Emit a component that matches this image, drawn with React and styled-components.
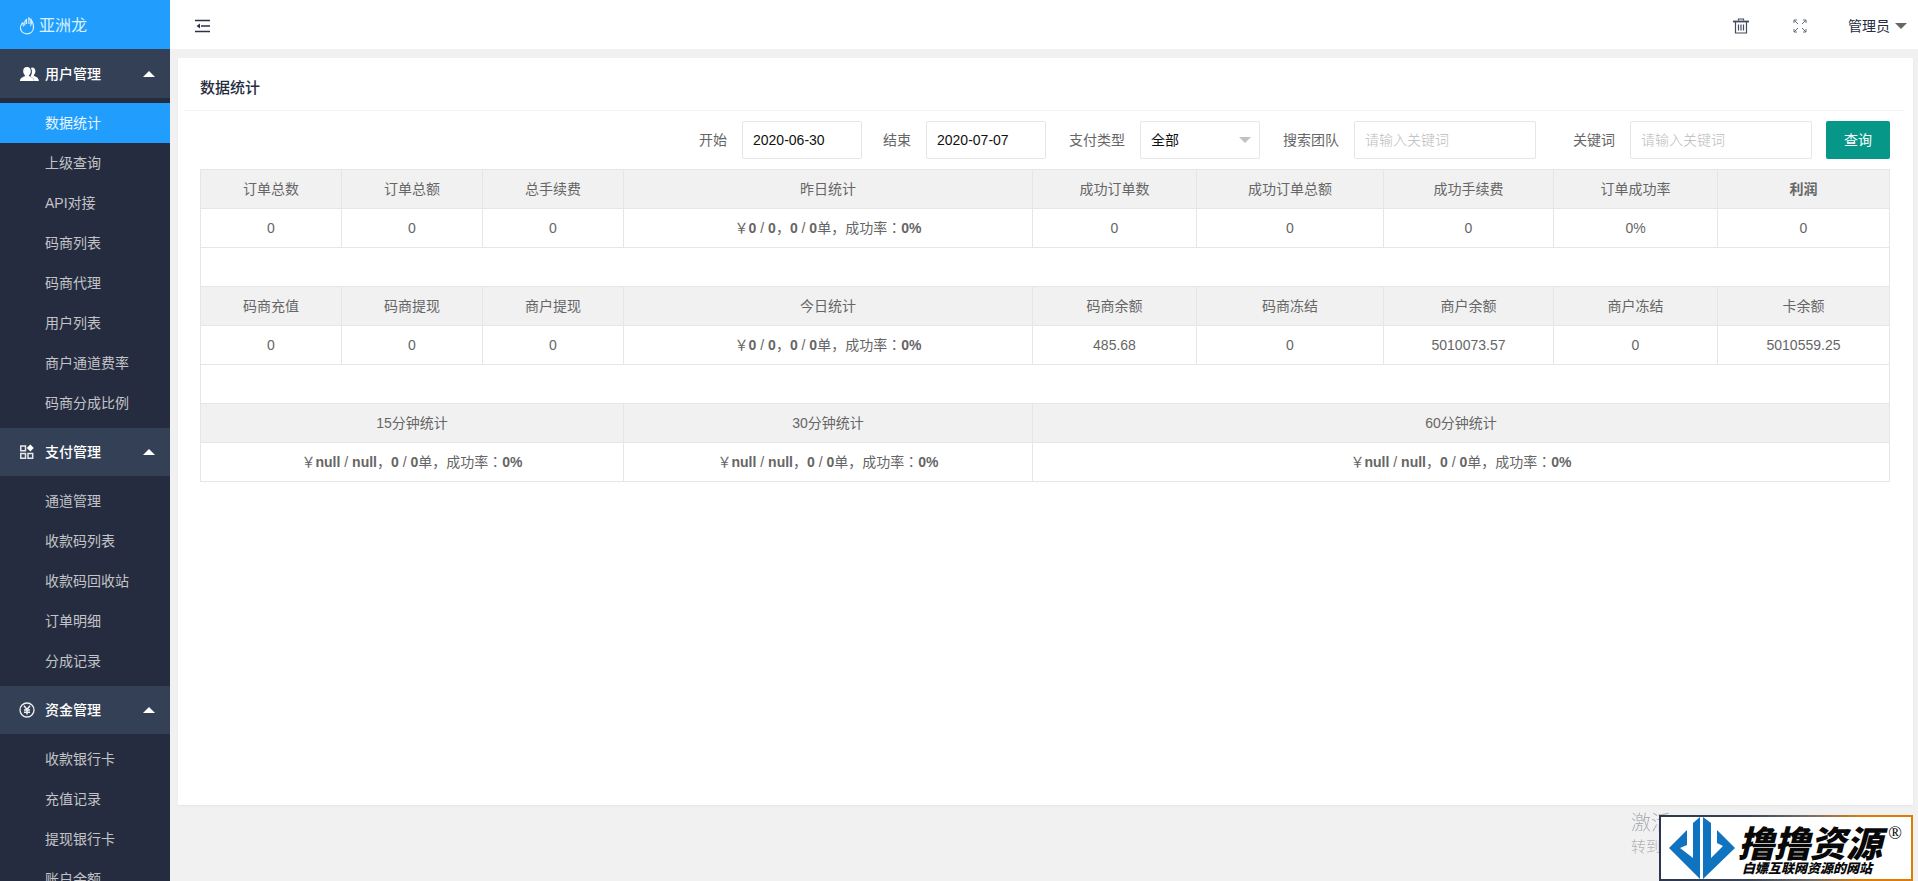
import React from "react";
import styled, { createGlobalStyle, css } from "styled-components";

const GlobalStyle = createGlobalStyle`
  *, *::before, *::after { box-sizing: border-box; }
  body {
    margin: 0;
    background: #f1f1f1;
    color: #666;
    font: 14px/24px "Liberation Sans", "Noto Sans CJK SC", sans-serif;
  }
  button, input, select { font: inherit; }
  a { color: inherit; text-decoration: none; }
`;

const Shell = styled.div`
  display: flex;
  height: 100vh;
  overflow: hidden;
`;

const Sidebar = styled.aside`
  flex: 0 0 170px;
  overflow: hidden;
  background: #262c3f;
`;

const Brand = styled.a`
  display: flex;
  align-items: center;
  gap: 3px;
  height: 49px;
  padding: 2px 0 0 19px;
  background: #219dfd;
  color: #d6f1ff;
  font-size: 16px;
`;

const Nav = styled.nav`
  border-top: 1px solid #344056;
`;

const GroupButton = styled.button`
  display: flex;
  align-items: center;
  width: 100%;
  height: 48px;
  padding: 0 15px 0 19px;
  border: 0;
  background: #344056;
  color: #fff;
  font-weight: 500;
  text-align: left;

  span { flex: 1; }
`;

const GroupIcon = styled.svg`
  flex: 0 0 auto;
  width: 20px;
  height: 16px;
  margin-right: 6px;
`;

const Caret = styled.svg`
  display: block;
  width: 12px;
  height: 6px;
  fill: ${(p) => p.$color};
`;

const MenuList = styled.ul`
  margin: 0;
  padding: 5px 0;
  list-style: none;
`;

const MenuLink = styled.a`
  display: block;
  height: 40px;
  padding-left: 45px;
  line-height: 40px;
  color: #c2c4c8;
  ${(p) => p.$active && css`background: #219dfd; color: #e6f6ff;`}
`;

const Main = styled.div`
  flex: 1;
  min-width: 0;
  display: flex;
  flex-direction: column;
`;

const TopBar = styled.header`
  display: flex;
  align-items: center;
  height: 49px;
  padding: 2px 11px 0 25px;
  background: #fff;
`;

const Spacer = styled.div`
  flex: 1;
`;

const IconButton = styled.button`
  display: flex;
  align-items: center;
  justify-content: center;
  width: 16px;
  height: 32px;
  padding: 0;
  border: 0;
  background: none;
  color: ${(p) => p.$color || "#2b3148"};
  margin-right: ${(p) => p.$gap || 0}px;
`;

const UserButton = styled.button`
  display: flex;
  align-items: center;
  gap: 5px;
  padding: 0;
  border: 0;
  background: none;
  color: #262c3f;
`;

const Content = styled.main`
  flex: 1;
  display: flex;
  padding: 9px 5px 76px 8px;
`;

const Card = styled.section`
  flex: 1;
  min-width: 0;
  padding: 0 9px 0 6px;
  background: #fff;
  box-shadow: 0 1px 2px rgba(0, 0, 0, 0.06);
`;

const CardTitle = styled.h1`
  margin: 0;
  height: 53px;
  padding: 4px 16px 0;
  border-bottom: 1px solid #f4f4f4;
  color: #262c3f;
  font-size: 15px;
  font-weight: 500;
  line-height: 52px;
`;

const CardBody = styled.div`
  padding: 10px 14px 0 16px;
`;

const Filters = styled.form`
  display: flex;
  justify-content: flex-end;
  gap: 14px;
  margin-bottom: 10px;
`;

const Field = styled.div`
  display: flex;
  align-items: center;
`;

const Label = styled.label`
  width: ${(p) => p.$width}px;
  padding-right: 15px;
  text-align: right;
  white-space: nowrap;
`;

const control = css`
  width: ${(p) => p.$width}px;
  height: 38px;
  padding: 0 10px;
  border: 1px solid #e6e6e6;
  border-radius: 2px;
  background: #fff;
  color: #111;
  outline: none;
`;

const TextInput = styled.input`
  ${control}
  &::placeholder { color: #bbb; opacity: 1; font-weight: 300; }
`;

const SelectWrap = styled.div`
  position: relative;
`;

const Select = styled.select`
  ${control}
  display: block;
  appearance: none;
`;

const SelectCaret = styled(Caret)`
  position: absolute;
  top: 16px;
  right: 9px;
  pointer-events: none;
`;

const SubmitButton = styled.button`
  width: 64px;
  height: 38px;
  padding: 0;
  border: 0;
  border-radius: 2px;
  background: #069788;
  color: #fff;
`;

const StatsTable = styled.table`
  width: 100%;
  table-layout: fixed;
  border-collapse: collapse;

  th, td {
    height: 39px;
    padding: 0;
    border: 1px solid #e6e6e6;
    font-weight: 400;
    line-height: 20px;
    text-align: center;
  }
  th { background: #f1f1f1; }
`;

const Colon = styled.span`
  font-family: "Noto Sans CJK JP", sans-serif;
  line-height: 0;
`;

const ActivationNote = styled.div`
  position: fixed;
  right: 247px;
  bottom: 24px;
  width: 40px;
  color: #adb0b5;
  font-size: 15px;
  font-weight: 300;
  line-height: 20px;
  white-space: nowrap;

  strong {
    display: block;
    font-size: 20px;
    font-weight: 300;
    line-height: 28px;
  }
`;

const Badge = styled.a`
  position: fixed;
  right: 5px;
  bottom: 0;
  display: flex;
  width: 254px;
  height: 66px;
  padding: 0 9px 0 8px;
  border: 2px solid transparent;
  background:
    linear-gradient(#fff, #fff) padding-box,
    linear-gradient(90deg, #2b3650 0%, #3b4556 35%, #75706a 60%, #dd7d05 80%) border-box;
  color: #080808;
`;

const BadgeText = styled.div`
  flex: 1;
  padding: 5px 0 0 3px;
  font-family: "Noto Sans CJK SC", sans-serif;
  font-weight: 900;
  font-style: italic;
  white-space: nowrap;
`;

const BadgeName = styled.div`
  font-size: 36px;
  line-height: 38px;
`;

const BadgeSlogan = styled.div`
  padding-left: 4px;
  font-size: 13px;
  line-height: 16px;
`;

const Registered = styled.span`
  padding-top: 6px;
  font: 18px/20px "Liberation Serif", serif;
`;

const icons = {
  users: (
    <g fill="#fff">
      <path d="M13 1.500c2.400 0 3.600 1.700 3.400 4-.1 1.600-.8 2.700-1.500 3.500v1c2.600 1 4.600 1.600 5 5h-4.600c-.4-2.600-2-3.600-4-4.500.8-1.200 1.500-2.600 1.600-4.600.1-1.500-.3-2.800-1-3.700.3-.4.700-.7 1.100-.7z" />
      <path d="M8 1c2.700 0 4 1.800 3.800 4.500-.1 1.700-.9 3-1.700 3.800v1c2.700 1 4.700 1.700 4.900 4.700H1c.2-3 2.200-3.700 4.900-4.700v-1C5.100 8.500 4.300 7.200 4.200 5.500 4 2.800 5.300 1 8 1z" />
    </g>
  ),
  grid: (
    <g fill="none" stroke="#e8e8e8" strokeWidth="1.500">
      <path d="M1.800 2h4.700v4.700H1.800zM1.800 9.500h4.700v4.700H1.800zM9 9.500h4.700v4.700H9z" />
      <path d="M11.300.5l3.500 3.500-3.500 3.500L7.800 4z" fill="#fff" stroke="none" />
    </g>
  ),
  yen: (
    <g fill="none" stroke="#eee" strokeWidth="1.300">
      <circle cx="8" cy="8" r="7" />
      <path d="M5 3.800L8 7.500l3-3.700M8 7.500v5M5 8h6M5 10.200h6" strokeWidth="1.500" />
    </g>
  ),
};

const menu = [
  {
    title: "用户管理",
    icon: "users",
    items: ["数据统计", "上级查询", "API对接", "码商列表", "码商代理", "用户列表", "商户通道费率", "码商分成比例"],
  },
  {
    title: "支付管理",
    icon: "grid",
    items: ["通道管理", "收款码列表", "收款码回收站", "订单明细", "分成记录"],
  },
  {
    title: "资金管理",
    icon: "yen",
    items: ["收款银行卡", "充值记录", "提现银行卡", "账户余额"],
  },
];

const columns = [141, 141, 141, 409, 164, 187, 170, 164, 172];

function Summary({ amount }) {
  return (
    <>
      ￥<b>{amount}</b> / <b>{amount}</b>，<b>0</b> / <b>0</b>单，成功率<Colon>：</Colon><b>0%</b>
    </>
  );
}

function UpCaret() {
  return (
    <Caret viewBox="0 0 12 6" $color="#fff" aria-hidden="true">
      <path d="M0 6L6 0l6 6z" />
    </Caret>
  );
}

function Statistics() {
  return (
    <StatsTable>
      <colgroup>
        {columns.map((w, i) => <col key={i} width={w} />)}
      </colgroup>
      <tbody>
        <tr>
          {["订单总数", "订单总额", "总手续费", "昨日统计", "成功订单数", "成功订单总额", "成功手续费", "订单成功率"].map((t) => (
            <th key={t} scope="col">{t}</th>
          ))}
          <th scope="col"><b>利润</b></th>
        </tr>
        <tr>
          <td>0</td><td>0</td><td>0</td>
          <td><Summary amount="0" /></td>
          <td>0</td><td>0</td><td>0</td><td>0%</td><td>0</td>
        </tr>
        <tr><td colSpan={9} /></tr>
        <tr>
          {["码商充值", "码商提现", "商户提现", "今日统计", "码商余额", "码商冻结", "商户余额", "商户冻结", "卡余额"].map((t) => (
            <th key={t} scope="col">{t}</th>
          ))}
        </tr>
        <tr>
          <td>0</td><td>0</td><td>0</td>
          <td><Summary amount="0" /></td>
          <td>485.68</td><td>0</td><td>5010073.57</td><td>0</td><td>5010559.25</td>
        </tr>
        <tr><td colSpan={9} /></tr>
        <tr>
          <th colSpan={3}>15分钟统计</th>
          <th>30分钟统计</th>
          <th colSpan={5}>60分钟统计</th>
        </tr>
        <tr>
          <td colSpan={3}><Summary amount="null" /></td>
          <td><Summary amount="null" /></td>
          <td colSpan={5}><Summary amount="null" /></td>
        </tr>
      </tbody>
    </StatsTable>
  );
}

export default function App() {
  return (
    <>
      <GlobalStyle />
      <Shell>
        <Sidebar>
          <Brand href="#home">
            <svg width="17" height="18" viewBox="0 0 17 18" fill="none" stroke="currentColor" strokeWidth="1.200" aria-hidden="true">
              <path d="M4.200 5.500C1.500 7.500 1 11 2 13.300c1.200 2.300 3.500 3.500 6 3.500 3.700 0 6.300-2.600 6.500-6 .1-2.800-.5-5.300-1.800-7.300.1 1.800-.1 3-.8 4.200V3.200c-.4-1-1-1.700-2-2.200V7M7.500 7V2.500C6.500 3.300 6 4 5.800 5v3.500M4.200 5.500v4" />
            </svg>
            亚洲龙
          </Brand>
          <Nav>
            {menu.map((group) => (
              <div key={group.title}>
                <GroupButton type="button" aria-expanded="true">
                  <GroupIcon viewBox="0 0 20 16" aria-hidden="true">{icons[group.icon]}</GroupIcon>
                  <span>{group.title}</span>
                  <UpCaret />
                </GroupButton>
                <MenuList>
                  {group.items.map((item) => (
                    <li key={item}>
                      <MenuLink href="#page" $active={item === "数据统计"}>{item}</MenuLink>
                    </li>
                  ))}
                </MenuList>
              </div>
            ))}
          </Nav>
        </Sidebar>
        <Main>
          <TopBar>
            <IconButton type="button" aria-label="收起菜单">
              <svg width="16" height="14" viewBox="0 0 16 14" aria-hidden="true">
                <path d="M0 1.500h15M6 7h9M0 12.500h15" stroke="currentColor" strokeWidth="1.500" />
                <path d="M5 4.500v5L1.500 7z" fill="currentColor" />
              </svg>
            </IconButton>
            <Spacer />
            <IconButton type="button" aria-label="清除缓存" $gap={43} $color="#444b5c">
              <svg width="16" height="16" viewBox="0 0 16 16" fill="none" stroke="currentColor" aria-hidden="true">
                <path d="M0 3.500h16" strokeWidth="1.800" />
                <path d="M5.500 2.500v-1.500h5v1.500M2.500 4v11h11V4M5.500 6.500v6M8 6.500v6M10.500 6.500v6" strokeWidth="1.200" />
              </svg>
            </IconButton>
            <IconButton type="button" aria-label="全屏" $gap={40} $color="#666c78">
              <svg width="14" height="14" viewBox="0 0 14 14" fill="none" stroke="currentColor" aria-hidden="true">
                <path d="M1 4V1h3M1 1l4 4M10 1h3v3M13 1L9 5M1 10v3h3M1 13l4-4M13 10v3h-3M13 13L9 9" />
              </svg>
            </IconButton>
            <UserButton type="button">
              管理员
              <Caret viewBox="0 0 12 6" $color="#666" aria-hidden="true">
                <path d="M0 0h12L6 6z" />
              </Caret>
            </UserButton>
          </TopBar>
          <Content>
            <Card>
              <CardTitle>数据统计</CardTitle>
              <CardBody>
                <Filters onSubmit={(e) => e.preventDefault()}>
                  <Field>
                    <Label htmlFor="start" $width={50}>开始</Label>
                    <TextInput id="start" $width={120} defaultValue="2020-06-30" />
                  </Field>
                  <Field>
                    <Label htmlFor="end" $width={50}>结束</Label>
                    <TextInput id="end" $width={120} defaultValue="2020-07-07" />
                  </Field>
                  <Field>
                    <Label htmlFor="payType" $width={80}>支付类型</Label>
                    <SelectWrap>
                      <Select id="payType" $width={120}>
                        <option>全部</option>
                      </Select>
                      <SelectCaret viewBox="0 0 12 6" $color="#c2c2c2" aria-hidden="true">
                        <path d="M0 0h12L6 6z" />
                      </SelectCaret>
                    </SelectWrap>
                  </Field>
                  <Field>
                    <Label htmlFor="team" $width={80}>搜索团队</Label>
                    <TextInput id="team" $width={182} placeholder="请输入关键词" />
                  </Field>
                  <Field>
                    <Label htmlFor="keyword" $width={80}>关键词</Label>
                    <TextInput id="keyword" $width={182} placeholder="请输入关键词" />
                  </Field>
                  <SubmitButton type="submit">查询</SubmitButton>
                </Filters>
                <Statistics />
              </CardBody>
            </Card>
          </Content>
        </Main>
      </Shell>
      <ActivationNote>
        <strong>激活</strong>
        转到
      </ActivationNote>
      <Badge href="#source">
        <svg width="66" height="62" viewBox="0 0 66 62" fill="#0f73bf" aria-hidden="true">
          <path d="M24 6L31 0V62L0 31 18 13V28L11 31 24 41z" />
          <path d="M34 0l8 6v35l12-12-6-3V13l18 18-32 31z" />
        </svg>
        <BadgeText>
          <BadgeName>撸撸资源</BadgeName>
          <BadgeSlogan>白嫖互联网资源的网站</BadgeSlogan>
        </BadgeText>
        <Registered>®</Registered>
      </Badge>
    </>
  );
}
